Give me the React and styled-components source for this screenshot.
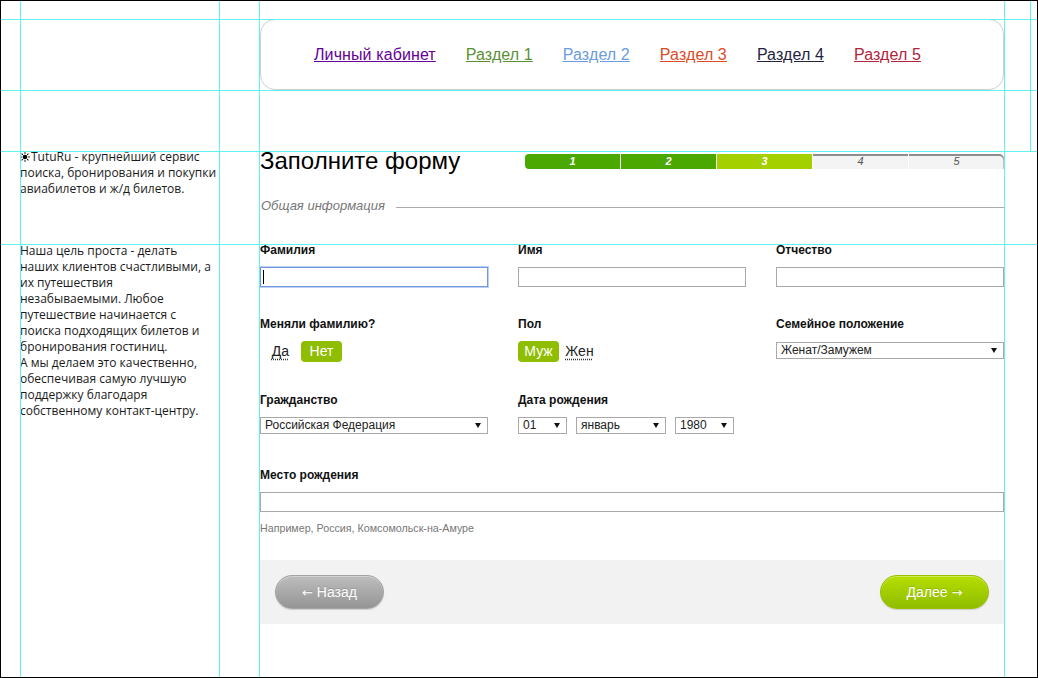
import React from "react";
import styled, { createGlobalStyle, css } from "styled-components";

const Global = createGlobalStyle`
  html, body { margin: 0; padding: 0; background: #fff; overflow: hidden; }
  body { font-family: "Liberation Sans", Arial, sans-serif; color: #222; }
  * { box-sizing: border-box; }
`;

const Frame = styled.div`
  position: relative;
  width: 1038px;
  height: 678px;
  overflow: hidden;
  background: #fff;
`;

const FrameBorder = styled.div`
  position: absolute;
  inset: 0;
  border: 1px solid #000;
  pointer-events: none;
  z-index: 3;
`;

const Guide = styled.div`
  position: absolute;
  background: #5ef2f2;
  pointer-events: none;
  z-index: 2;
  ${(p) =>
    p.$v
      ? css`
          left: ${p.$at}px;
          top: ${p.$from || 0}px;
          width: 1px;
          height: ${p.$len || 678}px;
        `
      : css`
          top: ${p.$at}px;
          left: 0;
          height: 1px;
          width: 1038px;
        `}
`;

const Layout = styled.div`
  display: flex;
  gap: 41px;
  padding-left: 20px;
`;

const Sidebar = styled.aside`
  width: 199px;
  padding-top: 149px;
  font-family: "Open Sans", "Noto Sans", sans-serif;
  font-size: 12px;
  line-height: 16px;
  color: #1a1a1a;
`;

const SideText = styled.p`
  margin: 0 0 ${(p) => p.$after || 0}px;
  white-space: nowrap;
`;

const SunIcon = styled.svg`
  width: 10px;
  height: 10px;
  vertical-align: -1px;
  margin-right: 1px;
`;

function Sun() {
  const rays = [0, 45, 90, 135, 180, 225, 270, 315];
  return (
    <SunIcon viewBox="0 0 10 10">
      <circle cx="5" cy="5" r="2.3" fill="#000" />
      {rays.map((a) => (
        <line
          key={a}
          x1="5"
          y1="1.9"
          x2="5"
          y2="0.2"
          stroke="#000"
          strokeWidth="1"
          transform={`rotate(${a} 5 5)`}
        />
      ))}
    </SunIcon>
  );
}

const Main = styled.main`
  width: 744px;
  padding-top: 19px;
`;

const Nav = styled.nav`
  height: 71px;
  border: 1px solid #cfcfcf;
  border-radius: 15px;
  display: flex;
  align-items: center;
  gap: 30px;
  padding-left: 53px;
`;

const NavLink = styled.a`
  font-size: 16px;
  line-height: 18px;
  letter-spacing: 0.1px;
  color: ${(p) => p.$c};
  text-decoration: underline;
  cursor: pointer;
`;

const TitleRow = styled.div`
  margin-top: 57px;
  display: flex;
  justify-content: space-between;
  align-items: flex-start;
`;

const Title = styled.h1`
  margin: 0;
  font-size: 24px;
  line-height: 28px;
  font-weight: normal;
  color: #000;
`;

const Progress = styled.div`
  margin-top: 7px;
  display: grid;
  grid-template-columns: repeat(5, 95px);
  gap: 1px;
  height: 15px;
`;

const Step = styled.div`
  height: 15px;
  font-size: 11px;
  line-height: 15px;
  font-style: italic;
  text-align: center;
  ${(p) =>
    p.$state === "done"
      ? css`
          background: #4ba800;
          color: #fff;
          font-weight: bold;
        `
      : p.$state === "current"
      ? css`
          background: #a4d000;
          color: #fff;
          font-weight: bold;
        `
      : css`
          background: #f4f4f4;
          color: #555;
          box-shadow: inset 0 2px 0 #8e8e8e;
        `}
  &:first-child { border-radius: 4px 0 0 4px; }
  &:last-child { border-radius: 0 5px 0 0; box-shadow: inset 0 2px 0 #8e8e8e, inset -1px 0 0 #c4c4c4; }
`;

const Legend = styled.div`
  margin-top: 23px;
  display: flex;
  align-items: center;
  gap: 11px;
  font-size: 13px;
  line-height: 16px;
  font-style: italic;
  color: #777;
  padding-left: 1px;
`;

const LegendLine = styled.span`
  flex: 1;
  height: 1px;
  margin-top: 2px;
  background: #ababab;
`;

const Row = styled.div`
  margin-top: ${(p) => p.$top}px;
  display: grid;
  grid-template-columns: ${(p) => (p.$full ? "1fr" : "repeat(3, 228px)")};
  column-gap: 30px;
`;

const Field = styled.div`
  display: flex;
  flex-direction: column;
`;

const Label = styled.label`
  font-size: 12px;
  line-height: 14px;
  font-weight: bold;
  color: #111;
  margin-bottom: ${(p) => p.$gap ?? 10}px;
`;

const InputWrap = styled.div`
  position: relative;
`;

const TextInput = styled.input`
  display: block;
  width: 100%;
  height: 20px;
  margin: 0;
  padding: 0 4px;
  font: 12px "Liberation Sans", Arial, sans-serif;
  border: 1px solid ${(p) => (p.$focused ? "#7097e0" : "#a9a9a9")};
  box-shadow: ${(p) => (p.$focused ? "0 0 0 1px #bcd0f4" : "none")};
  outline: none;
  background: #fff;
`;

const Caret = styled.span`
  position: absolute;
  left: 3px;
  top: 3px;
  width: 1px;
  height: 14px;
  background: #000;
`;

const Toggle = styled.div`
  display: flex;
  align-items: center;
  height: 21px;
`;

const Option = styled.span`
  min-width: 41px;
  height: 21px;
  padding: 0 6px;
  font-size: 14px;
  line-height: 21px;
  text-align: center;
  border-radius: 4px;
  cursor: pointer;
  ${(p) =>
    p.$on
      ? css`
          background: #8fbe00;
          color: #fff;
        `
      : css`
          color: #222;
          & > span {
            text-decoration: underline dotted #333;
            text-underline-offset: 3px;
          }
        `}
`;

const SelectRow = styled.div`
  display: flex;
  gap: 9px;
`;

const SelectWrap = styled.div`
  position: relative;
  width: ${(p) => (p.$w ? `${p.$w}px` : "100%")};
`;

const Select = styled.select`
  appearance: none;
  -webkit-appearance: none;
  display: block;
  width: 100%;
  height: 17px;
  margin: 0;
  padding: 0 16px 0 4px;
  border: 1px solid #a9a9a9;
  border-radius: 0;
  background: #fff;
  font: 12px "Liberation Sans", Arial, sans-serif;
  line-height: 15px;
  color: #222;
  outline: none;
`;

const Arrow = styled.span`
  position: absolute;
  right: 7px;
  top: 6px;
  width: 0;
  height: 0;
  border-left: 3px solid transparent;
  border-right: 3px solid transparent;
  border-top: 5px solid #111;
  pointer-events: none;
`;

const Hint = styled.div`
  margin-top: 10px;
  font-size: 10.7px;
  line-height: 13px;
  color: #777;
`;

const Footer = styled.div`
  margin-top: 25px;
  height: 64px;
  background: #f2f2f2;
  display: flex;
  align-items: center;
  justify-content: space-between;
  padding: 0 15px;
`;

const Button = styled.button`
  width: 109px;
  height: 34px;
  border-radius: 17px;
  font: 14px "Liberation Sans", Arial, sans-serif;
  color: #fff;
  text-shadow: 0 -1px 0 rgba(0, 0, 0, 0.15);
  cursor: pointer;
  padding: 0;
  box-shadow: inset 0 1px 0 rgba(255, 255, 255, 0.35), 0 1px 1px rgba(0, 0, 0, 0.15);
  ${(p) =>
    p.$primary
      ? css`
          background: linear-gradient(#b6de00, #8fbd00);
          border: 1px solid #98c000;
        `
      : css`
          background: linear-gradient(#bdbdbd, #959595);
          border: 1px solid #a3a3a3;
        `}
`;

const BtnArrow = styled.span`
  font-family: "DejaVu Sans", sans-serif;
  font-size: 13px;
`;

function Sel({ value, w }) {
  return (
    <SelectWrap $w={w}>
      <Select defaultValue={value}>
        <option>{value}</option>
      </Select>
      <Arrow />
    </SelectWrap>
  );
}

const links = [
  ["Личный кабинет", "#660099"],
  ["Раздел 1", "#5b8f36"],
  ["Раздел 2", "#6b9be0"],
  ["Раздел 3", "#dc4b26"],
  ["Раздел 4", "#24233f"],
  ["Раздел 5", "#b1243a"],
];

export default function App() {
  return (
    <Frame>
      <Global />
      <Layout>
        <Sidebar>
          <SideText $after={46}>
            <Sun />TutuRu - крупнейший сервис
            <br />
            поиска, бронирования и покупки
            <br />
            авиабилетов и ж/д билетов.
          </SideText>
          <SideText>
            Наша цель проста - делать
            <br />
            наших клиентов счастливыми, а
            <br />
            их путешествия
            <br />
            незабываемыми. Любое
            <br />
            путешествие начинается с
            <br />
            поиска подходящих билетов и
            <br />
            бронирования гостиниц.
            <br />
            А мы делаем это качественно,
            <br />
            обеспечивая самую лучшую
            <br />
            поддержку благодаря
            <br />
            собственному контакт-центру.
          </SideText>
        </Sidebar>
        <Main>
          <Nav>
            {links.map(([t, c]) => (
              <NavLink key={t} $c={c}>
                {t}
              </NavLink>
            ))}
          </Nav>
          <TitleRow>
            <Title>Заполните форму</Title>
            <Progress>
              <Step $state="done">1</Step>
              <Step $state="done">2</Step>
              <Step $state="current">3</Step>
              <Step>4</Step>
              <Step>5</Step>
            </Progress>
          </TitleRow>
          <Legend>
            Общая информация
            <LegendLine />
          </Legend>

          <Row $top={29}>
            <Field>
              <Label>Фамилия</Label>
              <InputWrap>
                <TextInput $focused />
                <Caret />
              </InputWrap>
            </Field>
            <Field>
              <Label>Имя</Label>
              <TextInput />
            </Field>
            <Field>
              <Label>Отчество</Label>
              <TextInput />
            </Field>
          </Row>

          <Row $top={30}>
            <Field>
              <Label>Меняли фамилию?</Label>
              <Toggle>
                <Option>
                  <span>Да</span>
                </Option>
                <Option $on>Нет</Option>
              </Toggle>
            </Field>
            <Field>
              <Label>Пол</Label>
              <Toggle>
                <Option $on>Муж</Option>
                <Option>
                  <span>Жен</span>
                </Option>
              </Toggle>
            </Field>
            <Field>
              <Label $gap={11}>Семейное положение</Label>
              <Sel value="Женат/Замужем" />
            </Field>
          </Row>

          <Row $top={31}>
            <Field>
              <Label>Гражданство</Label>
              <Sel value="Российская Федерация" />
            </Field>
            <Field>
              <Label>Дата рождения</Label>
              <SelectRow>
                <Sel value="01" w={49} />
                <Sel value="январь" w={90} />
                <Sel value="1980" w={59} />
              </SelectRow>
            </Field>
          </Row>

          <Row $top={34} $full>
            <Field>
              <Label>Место рождения</Label>
              <TextInput />
              <Hint>Например, Россия, Комсомольск-на-Амуре</Hint>
            </Field>
          </Row>

          <Footer>
            <Button>
              <BtnArrow>←</BtnArrow> Назад
            </Button>
            <Button $primary>
              Далее <BtnArrow>→</BtnArrow>
            </Button>
          </Footer>
        </Main>
      </Layout>

      <Guide $v $at={20} />
      <Guide $v $at={219} />
      <Guide $v $at={259} />
      <Guide $v $at={1004} />
      <Guide $v $at={1030} $len={151} />
      <Guide $at={19} />
      <Guide $at={90} />
      <Guide $at={151} />
      <Guide $at={244} />
      <FrameBorder />
    </Frame>
  );
}
